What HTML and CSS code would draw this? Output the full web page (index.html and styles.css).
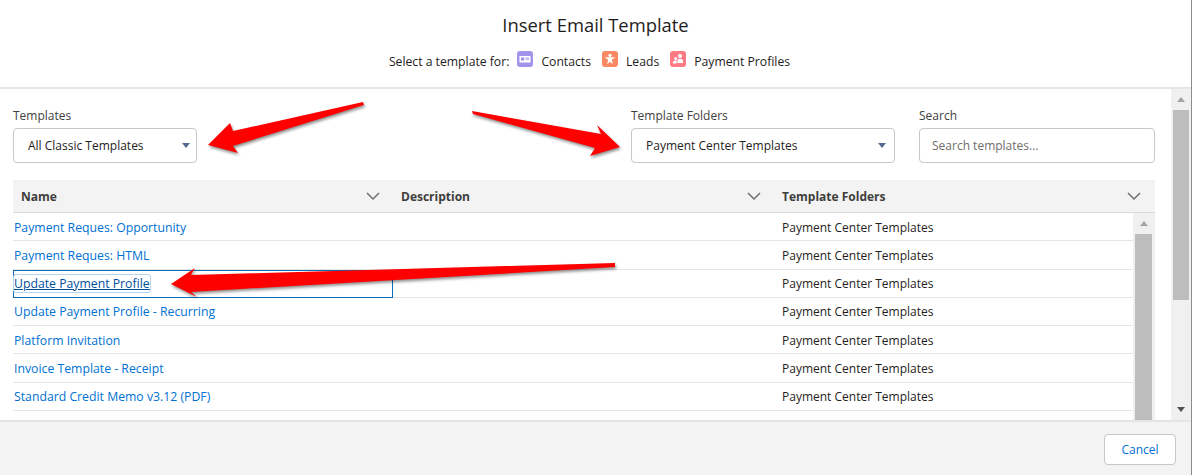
FILE: index.html
```html
<!DOCTYPE html>
<html lang="en">
<head>
<meta charset="utf-8">
<title>Insert Email Template</title>
<link rel="stylesheet" href="styles.css">
</head>
<body>
<div class="page">
  <header class="head">
    <h1 class="title">Insert Email Template</h1>
    <div class="sub">
      <span>Select a template for:</span>
      <svg class="obj c-contact" viewBox="0 0 16 16"><path fill="#fff" d="M2.500 5h11v6.500h-11z"/><path fill="#a094ed" d="M4 6.500h3.200v3H4zM8.500 6.500h3.500v.9H8.500zM8.500 8.200h3.500v.9H8.500z"/></svg>
      <span class="obj-label l1">Contacts</span>
      <svg class="obj c-lead" viewBox="0 0 16 16"><circle cx="8" cy="4.300" r="1.600" fill="#fff"/><path fill="#fff" d="M2.800 6.200h10.400L9.900 8.800l.9 4.400L8 10.800l-2.800 2.400.9-4.400z"/></svg>
      <span class="obj-label l2">Leads</span>
      <svg class="obj c-pay" viewBox="0 0 16 16"><circle cx="10" cy="5" r="2" fill="#fff"/><path fill="#fff" d="M7.400 12V10c0-1.300 1.200-2.200 2.800-2.200S13 8.700 13 10v2z"/><circle cx="5.700" cy="7.600" r="1.500" fill="#fff"/><path fill="#fff" d="M3 12.500v-1.300c0-1 1.200-1.700 2.700-1.700.3 0 .6 0 .9.100v2.900z"/></svg>
      <span class="obj-label">Payment Profiles</span>
    </div>
  </header>

  <div class="body">
    <main class="main">
      <div class="filters">
        <div class="field f-templates">
          <label class="label">Templates</label>
          <div class="control"><span>All Classic Templates</span><i class="caret"></i></div>
        </div>
        <div class="field f-folders">
          <label class="label">Template Folders</label>
          <div class="control"><span>Payment Center Templates</span><i class="caret"></i></div>
        </div>
        <div class="field f-search">
          <label class="label">Search</label>
          <div class="control"><span class="placeholder">Search templates...</span></div>
        </div>
      </div>

      <div class="thead">
        <div class="th th-1"><span>Name</span><svg class="chev" viewBox="0 0 14 14"><path d="M1 4l6 6 6-6" /></svg></div>
        <div class="th th-2"><span>Description</span><svg class="chev" viewBox="0 0 14 14"><path d="M1 4l6 6 6-6" /></svg></div>
        <div class="th th-3"><span>Template Folders</span><svg class="chev" viewBox="0 0 14 14"><path d="M1 4l6 6 6-6" /></svg></div>
      </div>

      <div class="tbody">
        <div class="rows">
          <div class="row"><div class="cell name"><a class="link">Payment Reques: Opportunity</a></div><div class="cell"></div><div class="cell folder">Payment Center Templates</div></div>
          <div class="row"><div class="cell name"><a class="link">Payment Reques: HTML</a></div><div class="cell"></div><div class="cell folder">Payment Center Templates</div></div>
          <div class="row"><div class="cell name focused"><a class="link active">Update Payment Profile</a></div><div class="cell"></div><div class="cell folder">Payment Center Templates</div></div>
          <div class="row"><div class="cell name"><a class="link">Update Payment Profile - Recurring</a></div><div class="cell"></div><div class="cell folder">Payment Center Templates</div></div>
          <div class="row"><div class="cell name"><a class="link">Platform Invitation</a></div><div class="cell"></div><div class="cell folder">Payment Center Templates</div></div>
          <div class="row"><div class="cell name"><a class="link">Invoice Template - Receipt</a></div><div class="cell"></div><div class="cell folder">Payment Center Templates</div></div>
          <div class="row"><div class="cell name"><a class="link">Standard Credit Memo v3.12 (PDF)</a></div><div class="cell"></div><div class="cell folder">Payment Center Templates</div></div>
        </div>
        <div class="sb sb-inner">
          <div class="sb-btn"><i class="up"></i></div>
          <div class="sb-thumb"></div>
        </div>
      </div>
    </main>
    <div class="sb sb-outer">
      <div class="sb-btn"><i class="up"></i></div>
      <div class="sb-thumb"></div>
      <div class="sb-rest"></div>
      <div class="sb-btn"><i class="down"></i></div>
    </div>
  </div>

  <footer class="foot">
    <button class="cancel">Cancel</button>
  </footer>

  <svg class="arrows" viewBox="0 0 1192 475" width="1192" height="475">
    <polygon points="363,102 233,131 230,123 208,145 238,153 233,146 364,105"/>
    <polygon points="472,111 601,134 597,125 620,147 590,156 595,148 473,114"/>
    <polygon points="615,263 191,275 195,268 171,284 197,297 191,292 615,267"/>
  </svg>
</div>
</body>
</html>
```
FILE: styles.css
```css
* { box-sizing: border-box; }
html, body { margin: 0; height: 100%; overflow: hidden; background: #fff; }
body { font-family: "Open Sans", "Noto Sans", sans-serif; font-size: 12px; color: #2b2826; }

.page { position: relative; width: 1192px; height: 475px; display: flex; flex-direction: column; border-right: 1px solid #8d8d8d; }

.head { height: 89px; flex: none; border-bottom: 2px solid #e5e5e5; display: flex; flex-direction: column; align-items: center; }
.title { margin: 12px 0 0; font-size: 18.400px; line-height: 25px; font-weight: 400; color: #1f1d1c; }
.sub { margin: 14px 12px 0 0; display: flex; align-items: center; height: 20px; font-size: 12.200px; color: #1f1d1c; }
.obj { width: 16px; height: 16px; border-radius: 3px; margin: 0 8px; position: relative; top: -2px; }
.c-contact { background: #a094ed; }
.c-lead { background: #f88962; }
.c-pay { background: #ff7b84; }
.obj-label.l1, .obj-label.l2 { margin-right: 3px; }

.body { flex: 1; display: flex; min-height: 0; overflow: hidden; }
.main { flex: 1; min-width: 0; padding: 18px 16px 0 13px; display: flex; flex-direction: column; }

.filters { display: flex; height: 73px; flex: none; }
.field { display: flex; flex-direction: column; }
.f-templates { width: 184px; margin-right: 434px; }
.f-folders { width: 264px; margin-right: 24px; }
.f-search { flex: 1; }
.label { height: 21px; line-height: 17px; color: #3e3e3c; }
.control { height: 35px; border: 1px solid #c9c7c5; border-radius: 4px; padding: 0 14px; display: flex; align-items: center; justify-content: space-between; color: #1f1d1c; }
.placeholder { color: #706e6b; margin-left: -2px; }
.caret { width: 0; height: 0; margin-right: -6px; border-left: 4px solid transparent; border-right: 4px solid transparent; border-top: 5px solid #54698d; }
.f-templates .caret { margin-right: -8px; }

.thead { flex: none; height: 33px; display: flex; background: #f3f3f3; border-bottom: 1px solid #dddbda; }
.th { display: flex; align-items: center; justify-content: space-between; padding-left: 8px; font-weight: 700; color: #3e3e3c; }
.th-1 { width: 380px; padding-right: 13px; }
.th-2 { width: 381px; padding-right: 13px; }
.th-3 { flex: 1; padding-right: 14px; }
.chev { width: 14px; height: 14px; }
.chev path { fill: none; stroke: #706e6b; stroke-width: 1.500; }

.tbody { flex: 1; min-height: 0; display: flex; overflow: hidden; }
.rows { width: 1120px; flex: none; }
.row { height: 28.250px; display: flex; border-bottom: 1px solid #e5e5e5; }
.cell { display: flex; align-items: center; }
.cell.name { width: 380px; padding-left: 1px; border: 1px solid transparent; border-bottom: 0; border-left: 0; }
.row > .cell:nth-child(2) { width: 381px; }
.cell.folder { padding: 1px 0 0 8px; color: #1f1d1c; }
.link { color: #0070d2; white-space: nowrap; font-size: 12.250px; }
.cell.focused { border: 1px solid #0b6fb8; padding-left: 0; margin-bottom: -1px; }
.link.active { color: #004f9e; text-decoration: underline; outline: 1px solid #b5d4ee; border-radius: 2px; }

.sb { display: flex; flex-direction: column; background: #f0f0f0; }
.sb-inner { width: 22px; flex: none; padding: 0 3px 0 2px; }
.sb-outer { width: 20px; flex: none; padding: 0 2px; }
.sb-btn { height: 21px; flex: none; display: flex; align-items: center; justify-content: center; }
.sb-thumb { background: #bdbdbd; }
.sb-inner .sb-thumb { flex: 1; }
.sb-outer .sb-thumb { height: 190px; flex: none; }
.sb-rest { flex: 1; }
.up { width: 0; height: 0; border-left: 4.500px solid transparent; border-right: 4.500px solid transparent; border-bottom: 5px solid #a3a3a3; }
.down { width: 0; height: 0; border-left: 4.500px solid transparent; border-right: 4.500px solid transparent; border-top: 5px solid #505050; }

.foot { height: 55px; flex: none; background: #f3f3f3; border-top: 2px solid #e5e5e5; display: flex; justify-content: flex-end; padding: 12px 15px 0 0; }
.cancel { width: 72px; height: 31px; background: #fff; border: 1px solid #c9c7c5; border-radius: 4px; color: #0070d2; font: inherit; padding: 0; }

.arrows { position: absolute; left: 0; top: 0; pointer-events: none; }
.arrows polygon { fill: #ff0000; filter: drop-shadow(1px 2px 1.500px rgba(0,0,0,.45)); }
```
